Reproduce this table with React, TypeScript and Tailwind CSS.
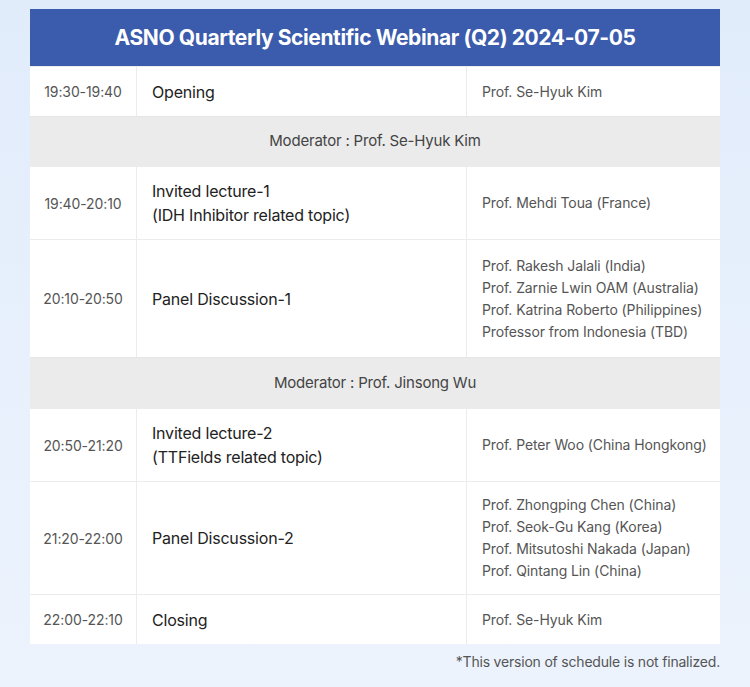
import React from "react";

type Row =
  | { kind: "mod"; text: string; h: string }
  | { kind: "row"; time: string; title: string[]; people: string[]; h: string };

const rows: Row[] = [
  { kind: "row", time: "19:30-19:40", title: ["Opening"], people: ["Prof. Se-Hyuk Kim"], h: "h-[50px]" },
  { kind: "mod", text: "Moderator : Prof. Se-Hyuk Kim", h: "h-[50px]" },
  {
    kind: "row",
    time: "19:40-20:10",
    title: ["Invited lecture-1", "(IDH Inhibitor related topic)"],
    people: ["Prof. Mehdi Toua (France)"],
    h: "h-[73px]",
  },
  {
    kind: "row",
    time: "20:10-20:50",
    title: ["Panel Discussion-1"],
    people: [
      "Prof. Rakesh Jalali (India)",
      "Prof. Zarnie Lwin OAM (Australia)",
      "Prof. Katrina Roberto (Philippines)",
      "Professor from Indonesia (TBD)",
    ],
    h: "h-[118px]",
  },
  { kind: "mod", text: "Moderator : Prof. Jinsong Wu", h: "h-[51px]" },
  {
    kind: "row",
    time: "20:50-21:20",
    title: ["Invited lecture-2", "(TTFields related topic)"],
    people: ["Prof. Peter Woo (China Hongkong)"],
    h: "h-[73px]",
  },
  {
    kind: "row",
    time: "21:20-22:00",
    title: ["Panel Discussion-2"],
    people: [
      "Prof. Zhongping Chen (China)",
      "Prof. Seok-Gu Kang (Korea)",
      "Prof. Mitsutoshi Nakada (Japan)",
      "Prof. Qintang Lin (China)",
    ],
    h: "h-[113px]",
  },
  { kind: "row", time: "22:00-22:10", title: ["Closing"], people: ["Prof. Se-Hyuk Kim"], h: "h-[50px]" },
];

export default function App() {
  return (
    <div
      className="w-[750px] h-[687px] overflow-hidden bg-[linear-gradient(180deg,#e1ecfb_0%,#e7f0fc_50%,#ecf3fd_100%)] pt-[9px]"
      style={{ fontFamily: "Inter, 'Noto Sans', sans-serif" }}
    >
      <div className="mx-[30px] w-[690px]">
        <div className="h-[57px] bg-[#3b5bac] flex items-center justify-center text-white text-[21px] font-bold tracking-[-0.4px]">
          ASNO Quarterly Scientific Webinar (Q2) 2024-07-05
        </div>
        <div className="flex flex-col">
          {rows.map((r, i) =>
            r.kind === "mod" ? (
              <div
                key={i}
                className={`${r.h} border-t border-[#e6e6e6] bg-[#ebebeb] flex items-center justify-center text-[15px] text-[#444] tracking-[-0.2px]`}
              >
                {r.text}
              </div>
            ) : (
              <div key={i} className={`${r.h} border-t border-[#ececec] bg-white flex`}>
                <div className="w-[107px] shrink-0 border-r border-[#ececec] flex items-center justify-center text-[14px] text-[#555] tracking-[-0.1px]">
                  {r.time}
                </div>
                <div className="w-[330px] shrink-0 border-r border-[#ececec] flex flex-col justify-center pl-[15px] text-[16px] leading-[24px] text-[#222] tracking-[-0.2px]">
                  {r.title.map((t) => (
                    <div key={t}>{t}</div>
                  ))}
                </div>
                <div className="flex-1 flex flex-col justify-center pl-[15px] text-[14px] leading-[22px] text-[#555] tracking-[-0.1px]">
                  {r.people.map((p) => (
                    <div key={p}>{p}</div>
                  ))}
                </div>
              </div>
            )
          )}
        </div>
        <div className="mt-[7px] text-right text-[14px] text-[#555] tracking-[-0.2px]">
          *This version of schedule is not finalized.
        </div>
      </div>
    </div>
  );
}
